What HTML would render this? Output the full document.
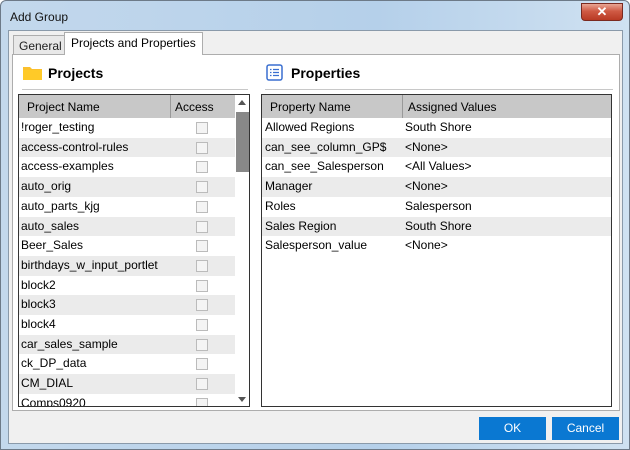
<!DOCTYPE html>
<html><head><style>
*{margin:0;padding:0;box-sizing:border-box}
body{width:630px;height:450px;overflow:hidden;font-family:"Liberation Sans",sans-serif;font-size:12px;color:#000;background:#fff}
.win{position:absolute;left:0;top:0;width:630px;height:450px;border:1px solid #6d7a88;border-radius:6px 6px 0 0;background:linear-gradient(90deg,#c3d8ec,#b5d0ea 60%,#cfe1f1)}
.title{position:absolute;left:9px;top:9px;font-size:12px;color:#111}
.close{position:absolute;left:580px;top:2px;width:42px;height:18px;border:1px solid #7a2a20;border-radius:0 0 4px 4px;background:linear-gradient(#e8a593,#cf5a44 45%,#b83a24);color:#fff;font-weight:bold;text-align:center;font-size:13px;line-height:16px}
.client{position:absolute;left:7px;top:29px;width:615px;height:414px;background:#f0f0f0;border:1px solid #8a9aaa}
.tab{position:absolute;height:21px;border:1px solid #adadad;border-bottom:none;padding:0 5px;line-height:20px;font-size:12px}
.panel{position:absolute;left:3px;top:23px;width:608px;height:357px;background:#fff;border:1px solid #adadad}
.box{position:absolute;border:1px solid #333;background:#fff;overflow:hidden}
.hdr{position:absolute;left:0;top:0;height:23px;background:#c8c8c8;width:100%}
.hdr span{position:absolute;top:5px}
.row{position:absolute;left:0;height:19.7px;line-height:19.7px}
.row span{position:absolute;white-space:nowrap}
.alt{background:#ebebeb}
.cb{position:absolute;left:177px;top:4px;width:12px;height:12px;border:1px solid #bbb;background:#f4f4f4}
.h{position:absolute;font-weight:bold;font-size:14px}
.sep{position:absolute;height:2px;border-top:1px solid #c8c8c8;border-bottom:1px solid #fff}
.btn{position:absolute;top:386px;height:23px;width:67px;background:#0a78d2;color:#fff;text-align:center;line-height:23px;font-size:12px}
</style></head><body>
<div class="win">
<div class="title">Add Group</div>
<div class="close">✕</div>
<div class="client">
<div class="tab" style="left:4px;top:4px;height:19px;background:#e8e8e8;color:#222">General</div>
<div class="tab" style="left:55px;top:1px;height:23px;background:#fff;z-index:2;padding:0 6px">Projects and Properties</div>
<div class="panel">
 <svg style="position:absolute;left:10px;top:11px" width="19" height="14"><path d="M0 1h7l2 2h10v11H0z" fill="#fbc02d"/><path d="M0 4h19v10H0z" fill="#ffca28"/></svg>
 <div class="h" style="left:35px;top:10px">Projects</div>
 <div class="sep" style="left:9px;top:34px;width:226px"></div>
 <svg style="position:absolute;left:253px;top:9px" width="17" height="17"><rect x="1" y="1" width="15" height="15" rx="2" fill="#fff" stroke="#3a6fd0" stroke-width="1.5"/><path d="M4 5.5h1.5M7 5.5h6M4 8.5h1.5M7 8.5h6M4 11.5h1.5M7 11.5h6" stroke="#3a6fd0" stroke-width="1.3"/></svg>
 <div class="h" style="left:278px;top:10px">Properties</div>
 <div class="sep" style="left:252px;top:34px;width:348px"></div>

 <div class="box" style="left:5px;top:39px;width:232px;height:313px">
  <div class="hdr"><span style="left:8px">Project Name</span><span style="left:156px">Access</span><div style="position:absolute;left:151px;top:0;width:1px;height:23px;background:#999"></div></div>
  <div style="position:absolute;left:0;top:23px;width:216px">
   <div class="row" style="top:0;width:216px"><span style="left:2px">!roger_testing</span><i class="cb"></i></div>
   <div class="row alt" style="top:19.7px;width:216px"><span style="left:2px">access-control-rules</span><i class="cb"></i></div>
   <div class="row" style="top:39.4px;width:216px"><span style="left:2px">access-examples</span><i class="cb"></i></div>
   <div class="row alt" style="top:59.1px;width:216px"><span style="left:2px">auto_orig</span><i class="cb"></i></div>
   <div class="row" style="top:78.8px;width:216px"><span style="left:2px">auto_parts_kjg</span><i class="cb"></i></div>
   <div class="row alt" style="top:98.5px;width:216px"><span style="left:2px">auto_sales</span><i class="cb"></i></div>
   <div class="row" style="top:118.2px;width:216px"><span style="left:2px">Beer_Sales</span><i class="cb"></i></div>
   <div class="row alt" style="top:137.9px;width:216px"><span style="left:2px">birthdays_w_input_portlet</span><i class="cb"></i></div>
   <div class="row" style="top:157.6px;width:216px"><span style="left:2px">block2</span><i class="cb"></i></div>
   <div class="row alt" style="top:177.3px;width:216px"><span style="left:2px">block3</span><i class="cb"></i></div>
   <div class="row" style="top:197px;width:216px"><span style="left:2px">block4</span><i class="cb"></i></div>
   <div class="row alt" style="top:216.7px;width:216px"><span style="left:2px">car_sales_sample</span><i class="cb"></i></div>
   <div class="row" style="top:236.4px;width:216px"><span style="left:2px">ck_DP_data</span><i class="cb"></i></div>
   <div class="row alt" style="top:256.1px;width:216px"><span style="left:2px">CM_DIAL</span><i class="cb"></i></div>
   <div class="row" style="top:275.8px;width:216px"><span style="left:2px">Comps0920</span><i class="cb"></i></div>
  </div>
  <div style="position:absolute;left:216px;top:0;width:15px;height:311px;background:#fff">
   <div style="position:absolute;left:3px;top:5px;width:0;height:0;border:4px solid transparent;border-bottom:5px solid #555;border-top:none"></div>
   <div style="position:absolute;left:1px;top:17px;width:13px;height:60px;background:#888"></div>
   <div style="position:absolute;left:3px;top:302px;width:0;height:0;border:4px solid transparent;border-top:5px solid #555;border-bottom:none"></div>
  </div>
 </div>

 <div class="box" style="left:248px;top:39px;width:351px;height:313px">
  <div class="hdr"><span style="left:8px">Property Name</span><span style="left:146px">Assigned Values</span><div style="position:absolute;left:140px;top:0;width:1px;height:23px;background:#999"></div></div>
  <div style="position:absolute;left:0;top:23px;width:349px">
   <div class="row" style="top:0;width:349px"><span style="left:3px">Allowed Regions</span><span style="left:143px">South Shore</span></div>
   <div class="row alt" style="top:19.7px;width:349px"><span style="left:3px">can_see_column_GP$</span><span style="left:143px">&lt;None&gt;</span></div>
   <div class="row" style="top:39.4px;width:349px"><span style="left:3px">can_see_Salesperson</span><span style="left:143px">&lt;All Values&gt;</span></div>
   <div class="row alt" style="top:59.1px;width:349px"><span style="left:3px">Manager</span><span style="left:143px">&lt;None&gt;</span></div>
   <div class="row" style="top:78.8px;width:349px"><span style="left:3px">Roles</span><span style="left:143px">Salesperson</span></div>
   <div class="row alt" style="top:98.5px;width:349px"><span style="left:3px">Sales Region</span><span style="left:143px">South Shore</span></div>
   <div class="row" style="top:118.2px;width:349px"><span style="left:3px">Salesperson_value</span><span style="left:143px">&lt;None&gt;</span></div>
  </div>
 </div>
</div>
<div class="btn" style="left:470px">OK</div>
<div class="btn" style="left:543px">Cancel</div>
</div>
</div>
</body></html>
